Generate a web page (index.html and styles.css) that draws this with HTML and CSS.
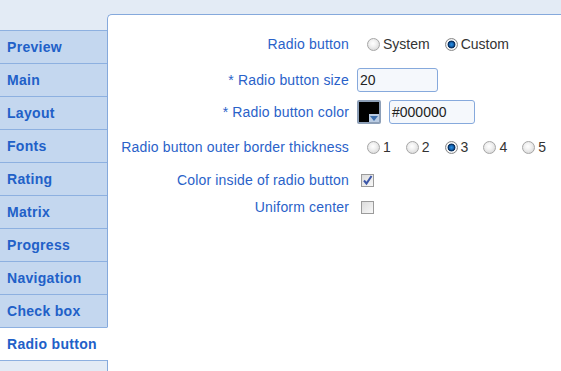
FILE: index.html
```html
<!DOCTYPE html>
<html>
<head>
<meta charset="utf-8">
<link rel="stylesheet" href="styles.css">
</head>
<body>
<div class="page">
  <nav class="sidebar">
    <div class="tab">Preview</div>
    <div class="tab">Main</div>
    <div class="tab">Layout</div>
    <div class="tab">Fonts</div>
    <div class="tab">Rating</div>
    <div class="tab">Matrix</div>
    <div class="tab">Progress</div>
    <div class="tab">Navigation</div>
    <div class="tab">Check box</div>
    <div class="tab active">Radio button</div>
    <div class="tab filler"></div>
  </nav>
  <main class="panel">
    <div class="form">
      <div class="label">Radio button</div>
      <div class="ctrl radios">
        <span class="opt"><span class="radio"></span>System</span>
        <span class="opt"><span class="radio on"></span>Custom</span>
      </div>

      <div class="label">* Radio button size</div>
      <div class="ctrl"><span class="input size">20</span></div>

      <div class="label">* Radio button color</div>
      <div class="ctrl">
        <span class="swatch"><span class="drop"><svg width="8" height="5" viewBox="0 0 8 5"><path d="M0 0H8L4 5Z" fill="#3d6fae"/></svg></span></span>
        <span class="input color">#000000</span>
      </div>

      <div class="label">Radio button outer border thickness</div>
      <div class="ctrl radios">
        <span class="opt"><span class="radio"></span>1</span>
        <span class="opt"><span class="radio"></span>2</span>
        <span class="opt"><span class="radio on"></span>3</span>
        <span class="opt"><span class="radio"></span>4</span>
        <span class="opt"><span class="radio"></span>5</span>
      </div>

      <div class="label">Color inside of radio button</div>
      <div class="ctrl"><span class="check"><svg width="11" height="11" viewBox="0 0 11 11"><path d="M2 5.5L4.5 8.5L9.5 1" fill="none" stroke="#3b56a8" stroke-width="2"/></svg></span></div>

      <div class="label">Uniform center</div>
      <div class="ctrl"><span class="check"></span></div>
    </div>
  </main>
</div>
</body>
</html>
```

FILE: styles.css
```css
html, body {
  margin: 0;
  padding: 0;
}
body {
  background: #e3ebf5;
  font-family: "Liberation Sans", Arial, sans-serif;
  font-size: 14px;
  width: 561px;
  height: 371px;
  overflow: hidden;
}
.page {
  display: flex;
  padding-top: 14px;
  height: 357px;
}
.sidebar {
  width: 108px;
  margin-top: 16px;
  margin-right: -1px;
  display: flex;
  flex-direction: column;
  flex-shrink: 0;
}
.tab {
  height: 32px;
  border-top: 1px solid #8db0e0;
  border-right: 1px solid #8db0e0;
  background: #c4d7ef;
  color: #2160c8;
  font-weight: bold;
  font-size: 14px;
  letter-spacing: 0.3px;
  line-height: 32px;
  padding-left: 7px;
}
.tab.active {
  background: #fff;
  border-right-color: #fff;
  position: relative;
  z-index: 1;
}
.tab.filler {
  background: #e3ebf5;
  flex: 1;
}
.panel {
  flex: 1;
  background: #fff;
  border-top: 1px solid #85a9dc;
  border-left: 1px solid #85a9dc;
  border-top-left-radius: 5px;
}
.form {
  display: grid;
  grid-template-columns: 241px auto;
  grid-template-rows: 36px 36px 28px 42px 24px 30px;
  column-gap: 8px;
  padding-top: 11px;
  align-items: center;
}
.label {
  text-align: right;
  color: #2a62c9;
  white-space: nowrap;
  letter-spacing: 0.17px;
}
.ctrl {
  display: flex;
  align-items: center;
  color: #333;
}
.radios {
  padding-left: 10px;
  gap: 15px;
}
.opt {
  display: flex;
  align-items: center;
  gap: 3px;
}
.radio {
  width: 13px;
  height: 13px;
  box-sizing: border-box;
  border-radius: 50%;
  border: 1px solid #a6a6a6;
  background: radial-gradient(circle at 45% 40%, #ffffff 0, #f2f2f2 35%, #cfcfcf 100%);
}
.radio.on {
  border-color: #8a8a8a;
  background: radial-gradient(circle, #2a8fe0 0, #1668b8 2px, #0b3566 3px, #0b3566 3.6px, #ffffff 4.3px, #e6e6e6 5.5px, #cfcfcf 100%);
}
.input {
  box-sizing: border-box;
  height: 24px;
  border: 1px solid #86a9dc;
  border-radius: 3px;
  background: #f5f8fc;
  color: #222;
  line-height: 22px;
  padding-left: 2px;
}
.input.size {
  width: 81px;
}
.input.color {
  width: 86px;
  margin-left: 8px;
}
.swatch {
  box-sizing: border-box;
  width: 24px;
  height: 24px;
  border: 2px solid #8d9fb7;
  border-radius: 2px;
  background: #000;
  display: flex;
  align-items: flex-end;
  justify-content: flex-end;
}
.drop {
  width: 10px;
  height: 8px;
  background: #b9cbe2;
  display: flex;
  align-items: center;
  justify-content: center;
}
.check {
  box-sizing: border-box;
  width: 13px;
  height: 13px;
  margin-left: 4px;
  border: 1px solid #9b9b9b;
  background: linear-gradient(135deg, #dcdcdc, #f8f8f8);
  display: flex;
  align-items: center;
  justify-content: center;
}
```
